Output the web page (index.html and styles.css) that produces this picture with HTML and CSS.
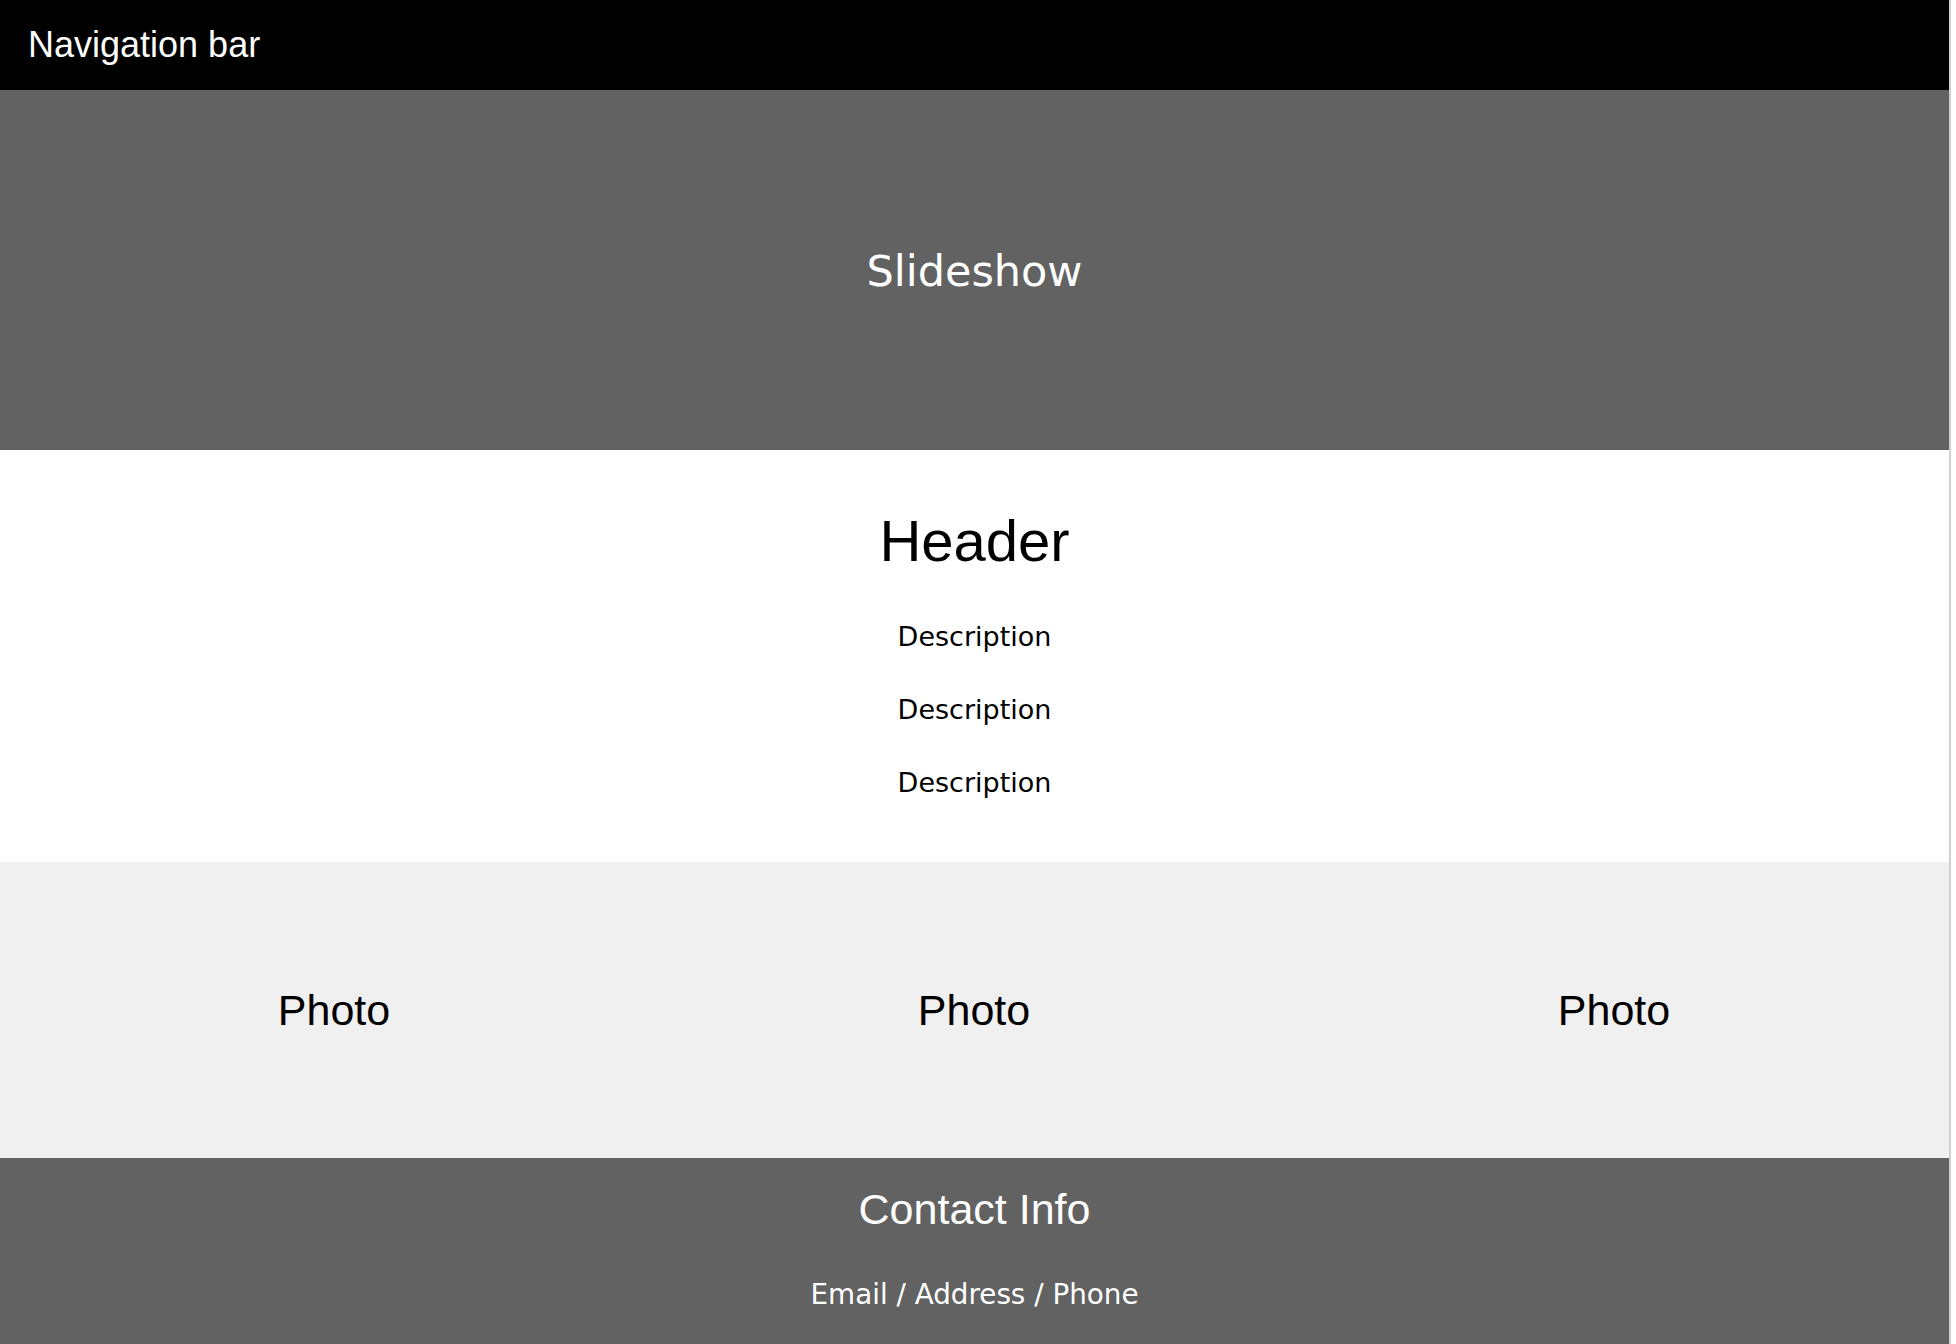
FILE: index.html
```html
<!DOCTYPE html>
<html lang="en">
<head>
<meta charset="UTF-8">
<meta name="viewport" content="width=device-width, initial-scale=1.0">
<title>Wireframe</title>
<link rel="stylesheet" href="styles.css">
</head>
<body>

<div class="page">
    <nav class="navbar">Navigation bar</nav>

    <div class="slideshow">Slideshow</div>

    <section class="intro">
        <h1>Header</h1>
        <p>Description</p>
        <p>Description</p>
        <p>Description</p>
    </section>

    <section class="photos">
        <div class="photo">Photo</div>
        <div class="photo">Photo</div>
        <div class="photo">Photo</div>
    </section>

    <footer class="contact">
        <h2>Contact Info</h2>
        <p>Email / Address / Phone</p>
    </footer>
</div>

</body>
</html>
```

FILE: styles.css
```css
body {
    margin: 0;
    padding: 0;
    background-color: #fff;
    font-family: "Liberation Sans", Arial, sans-serif;
}

.page {
    width: 1949px;
    border-right: 2px solid #d0d0d0;
}

.navbar {
    height: 90px;
    display: flex;
    align-items: center;
    padding-left: 28px;
    background-color: #000;
    color: #fff;
    font-size: 36px;
}

.slideshow {
    height: 360px;
    box-sizing: border-box;
    padding-top: 2px;
    display: flex;
    justify-content: center;
    align-items: center;
    background-color: #626262;
    color: #fff;
    font-family: "DejaVu Sans", Verdana, sans-serif;
    font-size: 43px;
}

.intro {
    height: 412px;
    box-sizing: border-box;
    padding-top: 56px;
    text-align: center;
}

.intro h1 {
    margin: 0 0 47px;
    font-size: 58px;
    font-weight: normal;
    line-height: 69px;
}

.intro p {
    margin: 0 0 43px;
    font-family: "DejaVu Sans", Verdana, sans-serif;
    font-size: 27px;
    line-height: 30px;
}

.photos {
    height: 296px;
    display: flex;
    padding: 0 15px 0 14px;
    background-color: #f0f0f0;
}

.photo {
    flex: 1;
    display: flex;
    justify-content: center;
    align-items: center;
    font-size: 43px;
}

.contact {
    height: 186px;
    box-sizing: border-box;
    padding-top: 27px;
    background-color: #626262;
    color: #fff;
    text-align: center;
}

.contact h2 {
    margin: 0 0 44px;
    font-size: 43px;
    font-weight: normal;
}

.contact p {
    margin: 0;
    font-family: "DejaVu Sans", Verdana, sans-serif;
    font-size: 27.8px;
}
```
